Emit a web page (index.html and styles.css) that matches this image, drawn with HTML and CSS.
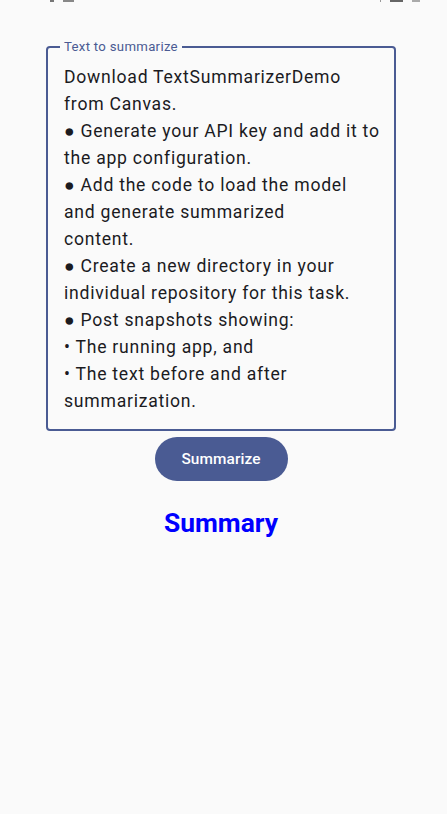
FILE: index.html
```html
<!DOCTYPE html>
<html>
<head>
<meta charset="utf-8">
<link rel="stylesheet" href="styles.css">
</head>
<body>
<div class="status">
  <div class="status-left"><span class="dot"></span><span class="bar"></span></div>
  <div class="status-right"><span class="tick"></span><span class="bar dark"></span><span class="bar light"></span></div>
</div>
<main class="content">
  <fieldset class="field">
    <legend class="label">Text to summarize</legend>
    <div class="text">Download TextSummarizerDemo<br>from Canvas.<br>● Generate your API key and add it to<br>the app configuration.<br>● Add the code to load the model<br>and generate summarized<br>content.<br>● Create a new directory in your<br>individual repository for this task.<br>● Post snapshots showing:<br>• The running app, and<br>• The text before and after<br>summarization.</div>
  </fieldset>
  <button class="btn">Summarize</button>
  <h1 class="title">Summary</h1>
</main>
</body>
</html>
```
FILE: styles.css
```css
html, body {
  margin: 0;
  padding: 0;
  background: #fafafa;
  width: 447px;
  height: 814px;
  overflow: hidden;
  font-family: Roboto, "Noto Sans", sans-serif;
}
.status {
  height: 3px;
  display: flex;
  justify-content: space-between;
  padding: 0 27px 0 50px;
}
.status-left, .status-right {
  display: flex;
  align-items: flex-start;
  gap: 9px;
}
.dot { width: 4px; height: 2px; background: #777; display: block; }
.tick { width: 1px; height: 2px; background: #999; display: block; }
.bar { width: 11px; height: 2px; background: #888; display: block; }
.bar.dark { width: 13px; background: #666; }
.bar.light { width: 8px; background: #aaa; }
.content {
  padding: 36px 51px 0 46px;
  display: flex;
  flex-direction: column;
  align-items: center;
}
.field {
  box-sizing: border-box;
  width: 350px;
  margin: 0;
  border: 2px solid #4a5b93;
  border-radius: 4px;
  padding: 9px 10px 14px 16px;
}
.label {
  font-size: 13.2px;
  color: #4a5b93;
  padding: 0 4px;
  margin-left: -4px;
  line-height: 16px;
  letter-spacing: 0.3px;
}
.text {
  font-size: 17.6px;
  line-height: 27px;
  letter-spacing: 0.75px;
  color: #1b1b1f;
  white-space: nowrap;
}
.btn {
  margin-top: 6px;
  width: 133px;
  height: 44px;
  border: none;
  border-radius: 22px;
  background: #4a5b93;
  color: #ffffff;
  font-family: Roboto, sans-serif;
  font-size: 15.4px;
  font-weight: 500;
  letter-spacing: 0.1px;
}
.title {
  margin: 24px 0 0;
  font-size: 26.4px;
  line-height: 36px;
  font-weight: 700;
  color: #0000ff;
}
```
